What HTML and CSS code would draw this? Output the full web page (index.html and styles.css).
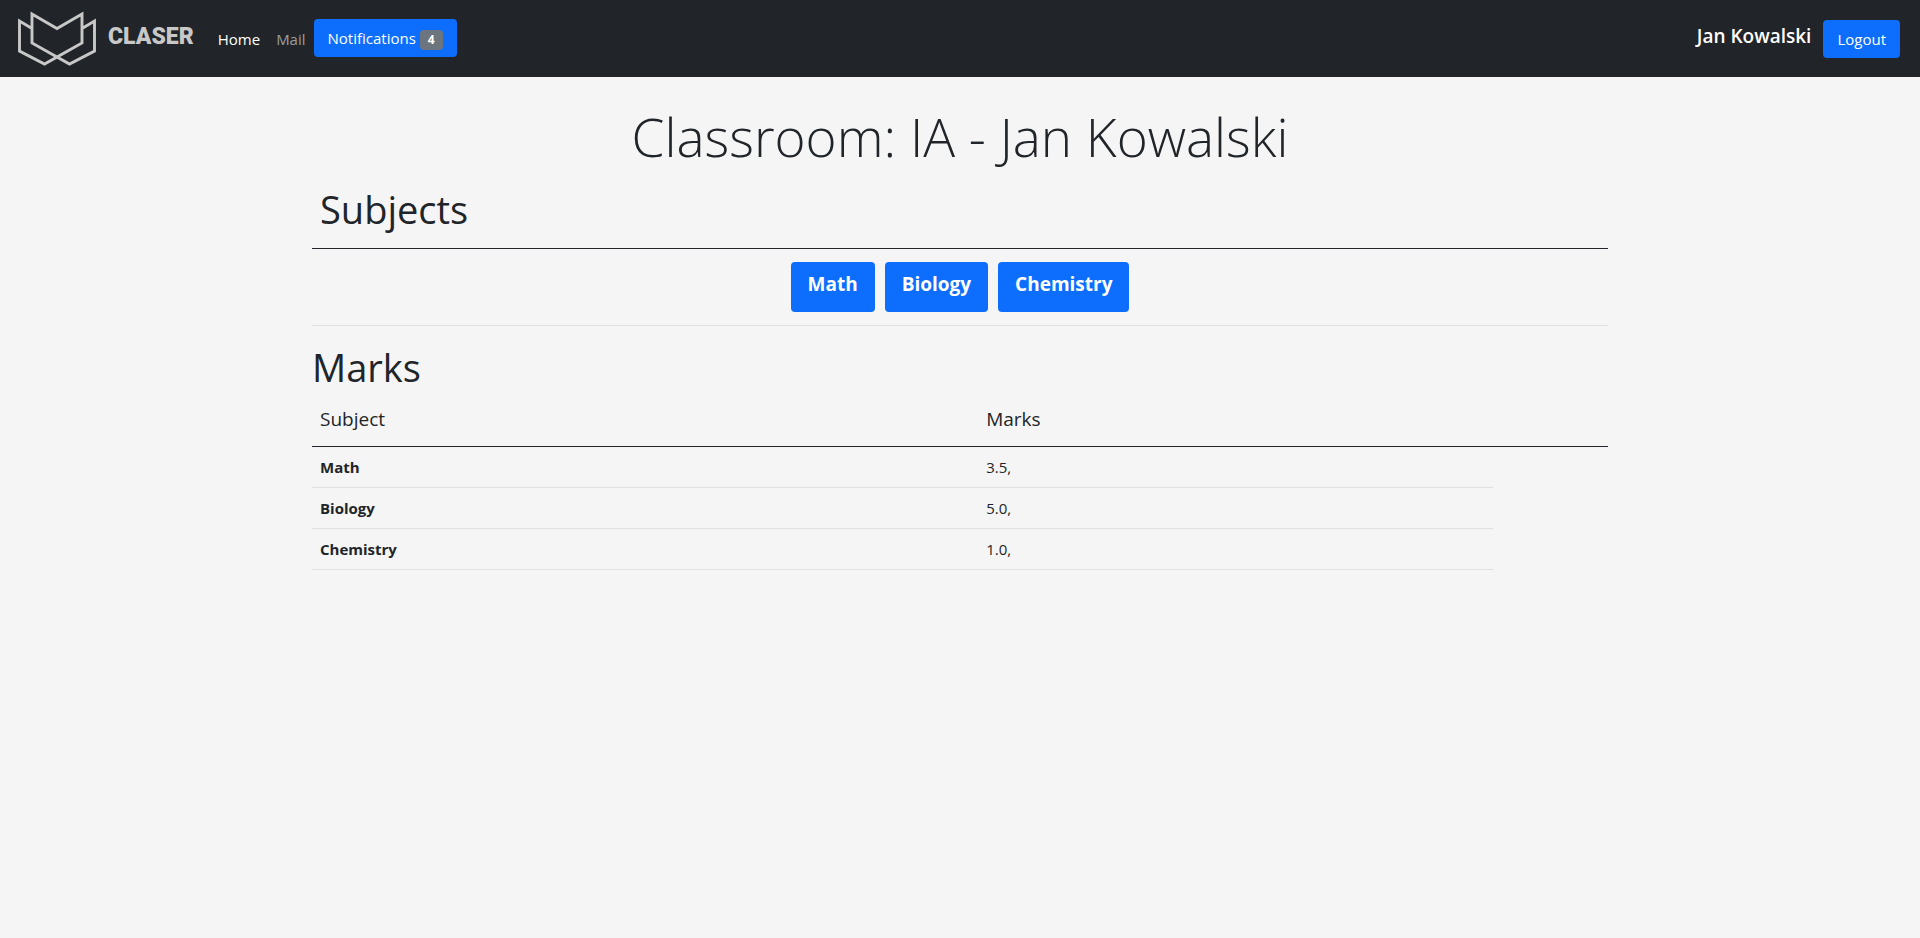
FILE: index.html
```html
<!DOCTYPE html>
<html lang="en">
<head>
  <meta charset="utf-8">
  <title>Claser</title>
  <link rel="stylesheet" href="styles.css">
</head>
<body>
  <header class="navbar">
    <a class="brand" href="#" aria-label="Claser">
      <svg class="brand-mark" width="80" height="54" viewBox="0 0 80 54" aria-hidden="true">
        <path d="M15 17.500L2.500 10V40L27.500 53L65 32V3L40 17.500L15 3V32L52.500 53L77.500 40V10L65 17.500" fill="none" stroke="#c8c8c8" stroke-width="2.900"/>
      </svg>
      <span class="brand-name">CLASER</span>
    </a>
    <nav class="nav">
      <a class="nav-link active" href="#">Home</a>
      <a class="nav-link" href="#">Mail</a>
      <button class="btn" type="button">Notifications <span class="badge">4</span></button>
    </nav>
    <div class="account">
      <span class="user-name">Jan Kowalski</span>
      <button class="btn" type="button">Logout</button>
    </div>
  </header>

  <main class="container">
    <h1 class="page-title">Classroom: IA - Jan Kowalski</h1>

    <section class="subjects">
      <h2 class="section-title">Subjects</h2>
      <div class="subject-list">
        <button class="btn btn-subject" type="button">Math</button>
        <button class="btn btn-subject" type="button">Biology</button>
        <button class="btn btn-subject" type="button">Chemistry</button>
      </div>
    </section>

    <h2 class="section-title marks-title">Marks</h2>
    <table class="marks">
      <colgroup>
        <col class="col-subject">
        <col class="col-marks">
        <col>
      </colgroup>
      <thead>
        <tr><th scope="col">Subject</th><th scope="col" colspan="2">Marks</th></tr>
      </thead>
      <tbody>
        <tr><th scope="row">Math</th><td>3.5,</td></tr>
        <tr><th scope="row">Biology</th><td>5.0,</td></tr>
        <tr><th scope="row">Chemistry</th><td>1.0,</td></tr>
      </tbody>
    </table>
  </main>
</body>
</html>
```
FILE: styles.css
```css
* {
  box-sizing: border-box;
}

body {
  margin: 0;
  background: #f5f5f5;
  color: #212529;
  font-family: "Open Sans", "Noto Sans", sans-serif;
  font-size: 15px;
  line-height: 24px;
}

.navbar {
  display: flex;
  align-items: center;
  padding: 11px 20px 12px 17px;
  background: #212529;
}

.brand {
  display: flex;
  gap: 11px;
  color: #c8c8c8;
  text-decoration: none;
}

.brand-mark {
  display: block;
  overflow: visible;
}

.brand-name {
  padding-top: 14px;
  font-family: Roboto, sans-serif;
  font-size: 23px;
  font-weight: 900;
}

.nav {
  display: flex;
  align-items: center;
  margin-left: 16px;
}

.nav-link {
  padding: 9px 8px 7px;
  color: #9b9d9f;
  text-decoration: none;
}

.nav-link.active {
  color: #fff;
}

.btn {
  padding: 7px 14px;
  border: 0;
  border-radius: 4px;
  background: #0d6efd;
  color: #fff;
  font: inherit;
  cursor: pointer;
}

.badge {
  display: inline-block;
  padding: 4px 8px;
  border-radius: 4px;
  background: #6c757d;
  font-size: 12px;
  font-weight: 700;
  line-height: 12px;
}

.account {
  display: flex;
  align-items: center;
  gap: 12px;
  margin-left: auto;
  padding-top: 2px;
}

.user-name {
  padding-bottom: 6px;
  color: #fff;
  font-size: 19px;
  font-weight: 600;
}

.container {
  max-width: 1320px;
  margin: 0 auto;
  padding: 26px 12px;
}

.page-title {
  margin: 0 0 7px;
  font-size: 53px;
  font-weight: 300;
  line-height: 67px;
  text-align: center;
}

.section-title {
  margin: 0 0 8px;
  font-size: 38px;
  font-weight: 400;
  line-height: 48px;
}

.subjects {
  border-bottom: 1px solid #dfe0e1;
}

.subjects .section-title {
  margin: 0;
  padding: 8px 8px 15px;
  border-bottom: 1px solid #212529;
}

.subject-list {
  display: flex;
  justify-content: center;
  gap: 10px;
  padding: 13px 0;
}

.btn-subject {
  padding: 10px 17px 16px;
  font-size: 19px;
  font-weight: 700;
}

.marks-title {
  margin-top: 17px;
}

.marks {
  width: 100%;
  table-layout: fixed;
  border-collapse: separate;
  border-spacing: 0;
  text-align: left;
}

.col-subject {
  width: 51.4%;
}

.col-marks {
  width: 39.7%;
}

.marks th,
.marks td {
  padding: 8px;
  border-bottom: 1px solid #dfe0e1;
}

.marks thead th {
  padding-bottom: 15px;
  border-bottom-color: #212529;
  font-size: 19px;
  font-weight: 500;
}
```
